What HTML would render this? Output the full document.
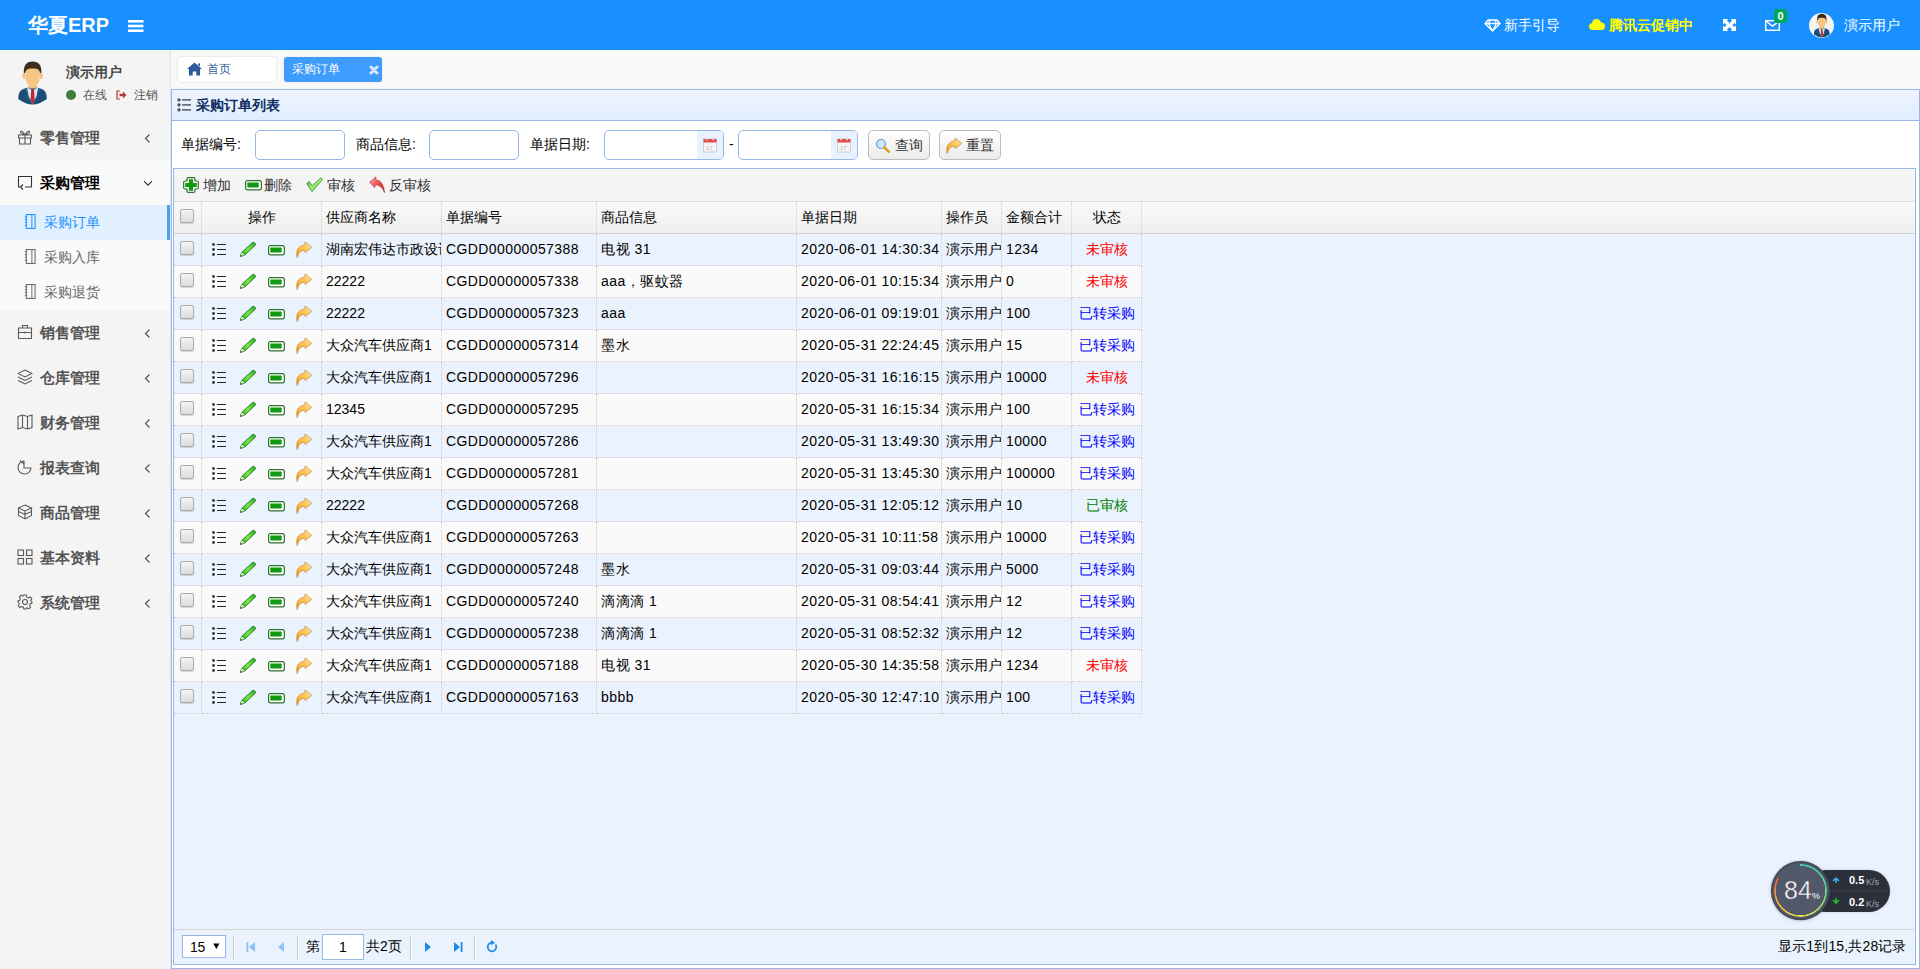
<!DOCTYPE html>
<html><head><meta charset="utf-8"><title>华夏ERP</title>
<style>
*{box-sizing:border-box;margin:0;padding:0}
html,body{width:1920px;height:969px;overflow:hidden}
body{position:relative;font-family:"Liberation Sans",sans-serif;font-size:14px;color:#333;background:#f9f9f9}
.a{position:absolute}
#hdr{left:0;top:0;width:1920px;height:50px;background:#1890ff;color:#fff}
#logo{left:28px;top:12px;font-size:20px;font-weight:bold;line-height:26px;white-space:nowrap}
#burger{left:128px;top:20px;width:15px;height:12px}
#burger i{position:absolute;left:0;width:15px;height:2.5px;background:#fff}
#side{left:0;top:50px;width:171px;height:919px;background:#f4f4f4;border-right:1px solid #e3e4e7}
.grp{position:absolute;left:0;width:170px;height:45px}
.grp .t{position:absolute;left:40px;top:14px;font-size:15px;font-weight:bold;color:#555;line-height:17px;white-space:nowrap}
.grp svg{position:absolute;left:17px;top:14px}
.grp .arr{position:absolute;left:144px;top:18px}
.sub{position:absolute;left:0;width:170px;height:35px}
.sub .t{position:absolute;left:44px;top:9px;font-size:14px;color:#666;line-height:16px;white-space:nowrap}
.sub svg{position:absolute;left:24px;top:10px}
#tabbar{left:171px;top:50px;width:1749px;height:39px;background:#f9f9f9}
.tab{position:absolute;top:57px;height:25px;border-radius:3px;font-size:12px;line-height:25px;white-space:nowrap}
#panel{left:171px;top:89px;width:1749px;height:880px;border:1px solid #95b8e7;background:#fff}
#ph{left:172px;top:90px;width:1747px;height:31px;background:linear-gradient(#eff5ff,#e0ecff);border-bottom:1px solid #95b8e7}
#ph .t{position:absolute;left:24px;top:7px;font-size:14px;font-weight:bold;color:#0e2d5f;line-height:16px}
.lbl{position:absolute;top:136px;font-size:14px;color:#000;line-height:16px;white-space:nowrap}
.inp{position:absolute;top:130px;height:30px;border:1px solid #95b8e7;border-radius:5px;background:#fff;overflow:hidden}
.inp .cal{position:absolute;right:0;top:0;width:26px;height:28px;background:#e8f1ff}
.btn{position:absolute;top:130px;height:30px;width:62px;border:1px solid #bbb;border-radius:5px;background:linear-gradient(#ffffff,#ebebeb);font-size:14px;color:#333;line-height:28px;white-space:nowrap}
#dg{left:173px;top:168px;width:1743px;height:797px;border:1px solid #95b8e7;background:#eaf2fd}
#tb{left:174px;top:169px;width:1741px;height:33px;background:#f4f4f4;border-bottom:1px solid #dcdcdc}
.tbi{position:absolute;top:8px;font-size:14px;color:#333;line-height:16px;white-space:nowrap}
.tbi svg{position:absolute;top:0}
.hr{position:absolute;left:174px;top:202px;width:1741px;height:32px;background:linear-gradient(#f9f9f9,#efefef);border-bottom:1px solid #d0d0d0}
.th{position:absolute;top:0;height:31px;border-right:1px dotted #ccc;font-size:14px;color:#000;line-height:31px;padding-left:4px;white-space:nowrap;overflow:hidden}
.th.ctr{text-align:center;padding-left:0}
.r{position:absolute;left:174px;width:968px;height:32px}
.r.alt{background:#fafafa}
.td{position:absolute;top:0;height:32px;border-right:1px dotted #ccc;border-bottom:1px dotted #ccc;white-space:nowrap;overflow:hidden}
.tx{font-size:14px;color:#000;line-height:31px;padding-left:4px}
.st{text-align:center;font-size:14px;line-height:31px}
.ck{position:absolute;left:6px;top:7px;width:14px;height:14px;border:1px solid #aaa;border-radius:2px;background:linear-gradient(#f4f4f4,#dcdcdc);box-shadow:0 1px 1px rgba(0,0,0,.15)}
.ic{position:absolute}
#pager{left:174px;top:929px;width:1741px;height:35px;padding-top:0;border-top:1px solid #d6d6d6;background:#eaf2fd}
.sep{position:absolute;top:6px;width:2px;height:24px;background:#ccc;border-right:1px solid #fff}

</style></head>
<body>
<svg width="0" height="0" style="position:absolute">
<defs>
<linearGradient id="g-pen" x1="0" y1="1" x2="1" y2="0"><stop offset="0" stop-color="#1e9a1e"/><stop offset="0.5" stop-color="#7ae84a"/><stop offset="1" stop-color="#22aa22"/></linearGradient>
<linearGradient id="g-redo" x1="0" y1="1" x2="1" y2="0"><stop offset="0" stop-color="#f29a12"/><stop offset="0.6" stop-color="#ffc860"/><stop offset="1" stop-color="#ffe6b0"/></linearGradient>
<linearGradient id="g-undo" x1="0" y1="0" x2="1" y2="1"><stop offset="0" stop-color="#ffb0b0"/><stop offset="0.6" stop-color="#f03a3a"/><stop offset="1" stop-color="#d02020"/></linearGradient>
<linearGradient id="g-chk" x1="0" y1="0" x2="1" y2="1"><stop offset="0" stop-color="#2aa52a"/><stop offset="0.5" stop-color="#a8f070"/><stop offset="1" stop-color="#3cb83c"/></linearGradient>
<g id="i-list"><circle cx="1.5" cy="1.5" r="1.4" fill="#333"/><circle cx="1.5" cy="6.5" r="1.4" fill="#333"/><circle cx="1.5" cy="11.5" r="1.4" fill="#333"/><rect x="5" y="1" width="9" height="1" fill="#222"/><rect x="5" y="6" width="9" height="1" fill="#222"/><rect x="5" y="11" width="9" height="1" fill="#222"/></g>
<g id="i-pen"><path d="M1.2 14.5 L2.79 10.32 L13.15 0.78 A2 2 0 0 1 15.85 3.72 L5.49 13.26 Z" fill="url(#g-pen)" stroke="#1a6e1a" stroke-width="0.8" stroke-linejoin="round"/><path d="M1.4 14.3 L2.9 10.6 L5.2 13 Z" fill="#fff3d0"/><path d="M1.1 14.6 L1.8 12.5 L3.3 13.9 Z" fill="#1a6e1a"/></g>
<g id="i-minus"><rect x="0.6" y="1.6" width="15.8" height="9.2" rx="2" fill="#fff" stroke="#2f6f2f" stroke-width="1.2"/><rect x="2.3" y="3.6" width="11.4" height="4.8" rx="0.6" fill="#119911"/></g>
<g id="i-redo"><path d="M1.2 16.6 Q-0.5 10 3 6.5 Q5.5 4 8.6 3.9 L9.2 1 L15.8 6.4 L9.2 11.6 L8.6 9.3 Q5 9.3 3.5 11.5 Q2.2 13.5 1.2 16.6 Z" fill="url(#g-redo)" stroke="#b87c2c" stroke-width="0.6" stroke-linejoin="round"/></g>
<g id="i-cal"><rect x="0.5" y="2" width="13" height="13" fill="#f4f4f4" stroke="#c8c8c8" stroke-width="0.8"/><rect x="0.5" y="2" width="13" height="3.5" fill="#e24e4e"/><rect x="3" y="0.5" width="1.6" height="3" rx="0.8" fill="#ddd"/><rect x="9.4" y="0.5" width="1.6" height="3" rx="0.8" fill="#ddd"/><text x="3" y="12.5" font-size="6" fill="#bbb" font-family="Liberation Sans">17</text></g>
<g id="i-search"><circle cx="6" cy="6" r="4.5" fill="#cde7fb" stroke="#6a9ec9" stroke-width="1.2"/><path d="M9.3 9.3 L13.8 13.8" stroke="#e09a1a" stroke-width="2.6" stroke-linecap="round"/></g>
<g id="avatar"><path d="M4.2 41 Q4 32.5 10 30.8 L14 29.5 H23 L27 30.8 Q33 32.5 32.9 41 Q25 46.5 18.5 46.5 Q12 46.5 4.2 41 Z" fill="#1b4d78"/><path d="M10 31 L13.5 30 L17 44 L12 38 L14 36 Z M27 31 L23.5 30 L20 44 L25 38 L23 36 Z" fill="#2a628f"/><rect x="14.4" y="24" width="8.4" height="6.5" rx="2" fill="#efc07e"/><path d="M13 29.3 L18.6 32.5 L24.2 29.3 L22.5 38 L18.6 46 L14.7 38 Z" fill="#dde6ef"/><path d="M17.2 31.8 H20 L20.6 42 L18.6 46.3 L16.6 42 Z" fill="#c8282d"/><ellipse cx="10" cy="18" rx="1.6" ry="3" fill="#f2c380"/><ellipse cx="27.2" cy="18" rx="1.6" ry="3" fill="#f2c380"/><path d="M11.6 13.5 Q11.6 9.6 18.6 9.6 Q25.8 9.6 25.8 13.5 V19 Q25.8 27.7 18.6 27.7 Q11.6 27.7 11.6 19 Z" fill="#f5c783"/><path d="M9.9 15.5 Q9 3.5 18.6 3.5 Q28.2 3.5 27.3 15.5 L25.8 14.5 Q25.5 10 18.6 10.5 Q11.8 10 11.4 14.5 Z" fill="#3f2b1b"/></g>
<clipPath id="cc"><circle cx="12.5" cy="12.5" r="12.5"/></clipPath>
<g id="avatar-c"><circle cx="12.5" cy="12.5" r="12.5" fill="#f4f4f4"/><g clip-path="url(#cc)"><g transform="translate(2.6 -1.1) scale(0.55)"><use href="#avatar"/></g></g></g>
</defs></svg>

<div id="hdr" class="a">
  <div id="logo" class="a">华夏ERP</div>
  <svg class="a" style="left:128px;top:19px" width="16" height="14" viewBox="0 0 16 14"><rect x="0" y="1" width="15.5" height="2.6" fill="#fff"/><rect x="0" y="5.7" width="15.5" height="2.6" fill="#fff"/><rect x="0" y="10.4" width="15.5" height="2.6" fill="#fff"/></svg>
  <svg class="a" style="left:1484px;top:19px" width="17" height="13" viewBox="0 0 17 13"><path d="M4 1 H13 L16 4.5 L8.5 12 L1 4.5 Z M1 4.5 H16 M6 1 L4.5 4.5 L8.5 12 L12.5 4.5 L11 1" fill="none" stroke="#fff" stroke-width="1.3" stroke-linejoin="round"/></svg>
  <div class="a" style="left:1504px;top:17px;font-size:14px;line-height:16px;white-space:nowrap">新手引导</div>
  <svg class="a" style="left:1589px;top:18px" width="16" height="12" viewBox="0 0 16 12"><path d="M4 12 Q0 12 0 8.5 Q0 5.5 3 5.2 Q3.5 1 7.5 1 Q11 1 12 4.5 Q16 4.8 16 8.3 Q16 12 12.5 12 Z" fill="#ffff00"/></svg>
  <div class="a" style="left:1609px;top:17px;font-size:14px;line-height:16px;font-weight:bold;color:#ffff00;white-space:nowrap">腾讯云促销中</div>
  <svg class="a" style="left:1723px;top:19px" width="13" height="12" viewBox="0 0 13 12"><path d="M0 0 H5.4 L3.9 1.5 L6.5 4.1 L4.1 6.5 L1.5 3.9 L0 5.4 Z" fill="#fff"/><g transform="translate(13 0) scale(-1 1)"><path d="M0 0 H5.4 L3.9 1.5 L6.5 4.1 L4.1 6.5 L1.5 3.9 L0 5.4 Z" fill="#fff"/></g><g transform="translate(0 12) scale(1 -1)"><path d="M0 0 H5.4 L3.9 1.5 L6.5 4.1 L4.1 6.5 L1.5 3.9 L0 5.4 Z" fill="#fff"/></g><g transform="translate(13 12) scale(-1 -1)"><path d="M0 0 H5.4 L3.9 1.5 L6.5 4.1 L4.1 6.5 L1.5 3.9 L0 5.4 Z" fill="#fff"/></g><path d="M4 4 L9 8.5 M9 4 L4 8.5" stroke="#fff" stroke-width="2.2"/></svg>
  <svg class="a" style="left:1765px;top:20px" width="15" height="11" viewBox="0 0 15 11"><rect x="0.7" y="0.7" width="13.6" height="9.6" fill="none" stroke="#fff" stroke-width="1.4"/><path d="M0.7 0.9 L7.5 6 L14.3 0.9" fill="none" stroke="#fff" stroke-width="1.4"/></svg>
  <div class="a" style="left:1774px;top:9px;width:13px;height:14px;background:#00a65a;border-radius:2px;color:#fff;font-size:11px;font-weight:bold;line-height:14px;text-align:center">0</div>
  <svg class="a" style="left:1809px;top:13px" width="25" height="25" viewBox="0 0 25 25"><use href="#avatar-c"/></svg>
  <div class="a" style="left:1844px;top:17px;font-size:14px;line-height:16px;white-space:nowrap">演示用户</div>
</div>

<div id="side" class="a">
  <svg class="a" style="left:14px;top:8px" width="36" height="48" viewBox="0 0 36 48"><use href="#avatar"/></svg>
  <div class="a" style="left:66px;top:14px;font-size:14px;line-height:16px;color:#444;font-weight:bold;white-space:nowrap">演示用户</div>
  <i class="a" style="left:66px;top:40px;width:10px;height:10px;border-radius:50%;background:#3d7d3d"></i>
  <div class="a" style="left:83px;top:38px;font-size:12px;line-height:14px;color:#555;white-space:nowrap">在线</div>
  <svg class="a" style="left:116px;top:40px" width="11" height="10" viewBox="0 0 11 10"><path d="M4 1 H1 V9 H4" fill="none" stroke="#b03a3a" stroke-width="1.2"/><path d="M3.5 3.8 H7 V1.5 L10.5 5 L7 8.5 V6.2 H3.5 Z" fill="#b03a3a"/></svg>
  <div class="a" style="left:134px;top:38px;font-size:12px;line-height:14px;color:#555;white-space:nowrap">注销</div>

  <div class="grp" style="top:65px"><svg width="16" height="16" viewBox="0 0 16 16"><path d="M1.5 6 H14.5 V9 H1.5 Z M2.5 9 V15 H13.5 V9 M8 6 V15 M8 6 Q5 1 3.5 2.5 Q2.5 4 8 6 Q11 1 12.5 2.5 Q13.5 4 8 6" fill="none" stroke="#5a5a5a" stroke-width="1.1"/></svg><span class="t">零售管理</span><svg class="arr" width="7" height="11" viewBox="0 0 7 11"><path d="M5.5 1.5 L1.5 5.5 L5.5 9.5" fill="none" stroke="#555" stroke-width="1.2"/></svg></div>
  <div class="a" style="left:0;top:110px;width:170px;height:150px;background:#fafafa"></div>
  <div class="grp" style="top:110px"><svg width="16" height="16" viewBox="0 0 16 16"><path d="M4 13 H1.5 V2.5 H14.5 V13 H8 M6 10.5 L3.5 13 L6 15.5" fill="none" stroke="#333" stroke-width="1.1"/></svg><span class="t" style="color:#000">采购管理</span><svg class="arr" style="left:143px;top:20px" width="10" height="7" viewBox="0 0 10 7"><path d="M1 1.2 L5 5.2 L9 1.2" fill="none" stroke="#333" stroke-width="1.2"/></svg></div>
  <div class="sub" style="top:155px;background:#e1f0ff"><svg width="12" height="15" viewBox="0 0 12 16" style="top:9px"><rect x="2" y="0.6" width="9.4" height="14.8" fill="none" stroke="#1890ff" stroke-width="1.1"/><path d="M0.5 3 H3 M0.5 6 H3 M0.5 9 H3 M0.5 12 H3 M8 0.6 V15.4" fill="none" stroke="#1890ff" stroke-width="1"/></svg><span class="t" style="color:#1890ff">采购订单</span><i class="a" style="left:167px;top:0;width:3px;height:35px;background:#4f9fec"></i></div>
  <div class="sub" style="top:190px"><svg width="12" height="15" viewBox="0 0 12 16" style="top:9px"><rect x="2" y="0.6" width="9.4" height="14.8" fill="none" stroke="#666" stroke-width="1.1"/><path d="M0.5 3 H3 M0.5 6 H3 M0.5 9 H3 M0.5 12 H3 M8 0.6 V15.4" fill="none" stroke="#666" stroke-width="1"/></svg><span class="t">采购入库</span></div>
  <div class="sub" style="top:225px"><svg width="12" height="15" viewBox="0 0 12 16" style="top:9px"><rect x="2" y="0.6" width="9.4" height="14.8" fill="none" stroke="#666" stroke-width="1.1"/><path d="M0.5 3 H3 M0.5 6 H3 M0.5 9 H3 M0.5 12 H3 M8 0.6 V15.4" fill="none" stroke="#666" stroke-width="1"/></svg><span class="t">采购退货</span></div>
  <div class="grp" style="top:260px"><svg width="16" height="16" viewBox="0 0 16 16"><path d="M1.5 4 H14.5 V14.5 H1.5 Z M5.5 4 V1.5 H10.5 V4 M1.5 8.5 H14.5 M8 7.5 V9.5" fill="none" stroke="#5a5a5a" stroke-width="1.1"/></svg><span class="t">销售管理</span><svg class="arr" width="7" height="11" viewBox="0 0 7 11"><path d="M5.5 1.5 L1.5 5.5 L5.5 9.5" fill="none" stroke="#555" stroke-width="1.2"/></svg></div>
  <div class="grp" style="top:305px"><svg width="16" height="16" viewBox="0 0 16 16"><path d="M8 1 L15 4.5 L8 8 L1 4.5 Z M1 8 L8 11.5 L15 8 M1 11.5 L8 15 L15 11.5" fill="none" stroke="#5a5a5a" stroke-width="1.1"/></svg><span class="t">仓库管理</span><svg class="arr" width="7" height="11" viewBox="0 0 7 11"><path d="M5.5 1.5 L1.5 5.5 L5.5 9.5" fill="none" stroke="#555" stroke-width="1.2"/></svg></div>
  <div class="grp" style="top:350px"><svg width="16" height="16" viewBox="0 0 16 16"><path d="M1 2.5 L5.5 1 L10.5 2.5 L15 1 V13.5 L10.5 15 L5.5 13.5 L1 15 Z M5.5 1 V13.5 M10.5 2.5 V15" fill="none" stroke="#5a5a5a" stroke-width="1.1"/></svg><span class="t">财务管理</span><svg class="arr" width="7" height="11" viewBox="0 0 7 11"><path d="M5.5 1.5 L1.5 5.5 L5.5 9.5" fill="none" stroke="#555" stroke-width="1.2"/></svg></div>
  <div class="grp" style="top:395px"><svg width="16" height="16" viewBox="0 0 16 16"><path d="M7 2 A6.5 6.5 0 1 0 14 9 H7 Z" fill="none" stroke="#5a5a5a" stroke-width="1.1"/><path d="M3 1.5 L7 5" fill="none" stroke="#5a5a5a" stroke-width="1.1"/></svg><span class="t">报表查询</span><svg class="arr" width="7" height="11" viewBox="0 0 7 11"><path d="M5.5 1.5 L1.5 5.5 L5.5 9.5" fill="none" stroke="#555" stroke-width="1.2"/></svg></div>
  <div class="grp" style="top:440px"><svg width="16" height="16" viewBox="0 0 16 16"><path d="M8 1 L14.5 4 L8 7 L1.5 4 Z M1.5 4 V11.5 L8 15 L14.5 11.5 V4 M8 7 V15 M1.5 7.5 L8 10.5 L14.5 7.5" fill="none" stroke="#5a5a5a" stroke-width="1.1"/></svg><span class="t">商品管理</span><svg class="arr" width="7" height="11" viewBox="0 0 7 11"><path d="M5.5 1.5 L1.5 5.5 L5.5 9.5" fill="none" stroke="#555" stroke-width="1.2"/></svg></div>
  <div class="grp" style="top:485px"><svg width="16" height="16" viewBox="0 0 16 16"><rect x="1" y="1" width="5.5" height="5.5" fill="none" stroke="#5a5a5a" stroke-width="1.1"/><rect x="9.5" y="1" width="5.5" height="5.5" fill="none" stroke="#5a5a5a" stroke-width="1.1"/><rect x="1" y="9.5" width="5.5" height="5.5" fill="none" stroke="#5a5a5a" stroke-width="1.1"/><rect x="9.5" y="9.5" width="5.5" height="5.5" fill="none" stroke="#5a5a5a" stroke-width="1.1"/></svg><span class="t">基本资料</span><svg class="arr" width="7" height="11" viewBox="0 0 7 11"><path d="M5.5 1.5 L1.5 5.5 L5.5 9.5" fill="none" stroke="#555" stroke-width="1.2"/></svg></div>
  <div class="grp" style="top:530px"><svg width="16" height="16" viewBox="0 0 16 16"><circle cx="8" cy="8" r="2.5" fill="none" stroke="#5a5a5a" stroke-width="1.1"/><path d="M6.8 1 H9.2 L9.6 3 L11.3 3.9 L13.1 2.9 L14.8 4.6 L13.8 6.4 L14.4 8 L15 8 V9.2 L13.2 9.7 L12.6 11.3 L13.6 13.1 L11.9 14.8 L10.1 13.8 L9.2 14.2 V15 H6.8 L6.4 13.2 L4.8 12.5 L3 13.5 L1.3 11.8 L2.3 10 L1.7 8.5 L1 8 V6.8 L2.8 6.3 L3.4 4.7 L2.4 2.9 L4.1 1.2 L5.9 2.2 L6.4 1.9 Z" fill="none" stroke="#5a5a5a" stroke-width="1.1"/></svg><span class="t">系统管理</span><svg class="arr" width="7" height="11" viewBox="0 0 7 11"><path d="M5.5 1.5 L1.5 5.5 L5.5 9.5" fill="none" stroke="#555" stroke-width="1.2"/></svg></div>
</div>

<div id="tabbar" class="a"></div>
<div class="tab" style="left:178px;width:98px;background:#fff;box-shadow:0 0 2px rgba(0,0,0,.2)">
  <svg class="a" style="left:8px;top:5px" width="17" height="14" viewBox="0 0 16 14"><path d="M8 0.5 L15.5 7 L13.5 7 V13.5 H9.8 V9.5 H6.2 V13.5 H2.5 V7 H0.5 Z M11.5 1.5 H13.5 V4.5 L11.5 2.8 Z" fill="#2d5b9a"/></svg>
  <span class="a" style="left:29px;top:0;color:#2d5b9a">首页</span>
</div>
<div class="tab" style="left:284px;width:98px;background:#3d9cfd;color:#fff;box-shadow:0 0 2px rgba(0,0,0,.12)">
  <span class="a" style="left:8px;top:0">采购订单</span>
  <svg class="a" style="left:85px;top:8px" width="10" height="10" viewBox="0 0 10 10"><path d="M2 2 L8 8 M8 2 L2 8" stroke="#dce9fc" stroke-width="3" stroke-linecap="round"/></svg>
</div>

<div id="panel" class="a"></div>
<div id="ph" class="a">
  <svg class="a" style="left:5px;top:8px" width="16" height="14" viewBox="0 0 16 14"><circle cx="2" cy="1.9" r="1.2" fill="#777" stroke="#333" stroke-width="0.9"/><circle cx="2" cy="6.9" r="1.2" fill="#777" stroke="#333" stroke-width="0.9"/><circle cx="2" cy="11.9" r="1.2" fill="#777" stroke="#333" stroke-width="0.9"/><rect x="5" y="1.3" width="9" height="1.2" fill="#333"/><rect x="5" y="6.3" width="9" height="1.2" fill="#333"/><rect x="5" y="11.3" width="9" height="1.2" fill="#333"/></svg>
  <span class="t">采购订单列表</span>
</div>
<div class="lbl" style="left:181px">单据编号:</div>
<div class="inp" style="left:255px;width:90px"></div>
<div class="lbl" style="left:356px">商品信息:</div>
<div class="inp" style="left:429px;width:90px"></div>
<div class="lbl" style="left:530px">单据日期:</div>
<div class="inp" style="left:604px;width:120px"><div class="cal"><svg class="a" style="left:6px;top:6px" width="14" height="16"><use href="#i-cal"/></svg></div></div>
<div class="a" style="left:729px;top:136px;font-size:14px;line-height:16px;color:#000">-</div>
<div class="inp" style="left:738px;width:120px"><div class="cal"><svg class="a" style="left:6px;top:6px" width="14" height="16"><use href="#i-cal"/></svg></div></div>
<div class="btn" style="left:868px"><svg class="a" style="left:6px;top:7px" width="15" height="15"><use href="#i-search"/></svg><span class="a" style="left:26px;top:0">查询</span></div>
<div class="btn" style="left:939px"><svg class="a" style="left:6px;top:6px" width="17" height="17" viewBox="0 0 17 17"><use href="#i-redo"/></svg><span class="a" style="left:26px;top:0">重置</span></div>

<div id="dg" class="a"></div>
<div id="tb" class="a">
  <div class="tbi" style="left:9px"><svg width="16" height="16" viewBox="0 0 16 16" style="left:0;top:0"><path d="M5.2 0.7 H10.8 Q12 0.7 12 1.9 V4 H14.1 Q15.3 4 15.3 5.2 V10.8 Q15.3 12 14.1 12 H12 V14.1 Q12 15.3 10.8 15.3 H5.2 Q4 15.3 4 14.1 V12 H1.9 Q0.7 12 0.7 10.8 V5.2 Q0.7 4 1.9 4 H4 V1.9 Q4 0.7 5.2 0.7 Z" fill="#fff" stroke="#2f6f2f" stroke-width="1.2"/><path d="M5.9 2.2 H10.1 V5.9 H13.8 V10.1 H10.1 V13.8 H5.9 V10.1 H2.2 V5.9 H5.9 Z" fill="#109a10"/></svg><span style="position:absolute;left:20px;top:0">增加</span></div>
  <div class="tbi" style="left:71px"><svg width="17" height="12" viewBox="0 0 17 12" style="left:0;top:2px"><use href="#i-minus"/></svg><span style="position:absolute;left:19px;top:0">删除</span></div>
  <div class="tbi" style="left:132px"><svg width="17" height="16" viewBox="0 0 17 16" style="left:0;top:0"><path d="M0.8 6.5 L3.2 4.6 L6.2 8.8 L15 0.8 L16.6 2.4 L6 14.6 Z" fill="url(#g-chk)" stroke="#2a8a2a" stroke-width="0.8" stroke-linejoin="round"/></svg><span style="position:absolute;left:21px;top:0">审核</span></div>
  <div class="tbi" style="left:195px"><svg width="17" height="19" viewBox="0 0 17 19" style="left:0;top:-2px"><path d="M0.6 7.2 L7 1.8 L6.8 4.8 Q14.5 5.5 15.6 17.6 Q12.5 10 6.2 9.6 L5.8 12.6 Z" fill="url(#g-undo)" stroke="#9e3030" stroke-width="0.6" stroke-linejoin="round"/></svg><span style="position:absolute;left:20px;top:0">反审核</span></div>
</div>
<div class="hr"><div class="th" style="left:0px;width:28px"><i class="ck"></i></div><div class="th ctr" style="left:28px;width:120px">操作</div><div class="th" style="left:148px;width:120px">供应商名称</div><div class="th" style="left:268px;width:155px">单据编号</div><div class="th" style="left:423px;width:200px">商品信息</div><div class="th" style="left:623px;width:145px">单据日期</div><div class="th" style="left:768px;width:60px">操作员</div><div class="th" style="left:828px;width:70px">金额合计</div><div class="th ctr" style="left:898px;width:70px">状态</div></div>
<div class="r" style="top:234px"><div class="td" style="left:0px;width:28px"><i class="ck"></i></div><div class="td" style="left:28px;width:120px"><svg class="ic" style="left:10px;top:9px" width="16" height="15"><use href="#i-list"/></svg><svg class="ic" style="left:37px;top:8px" width="17" height="17"><use href="#i-pen"/></svg><svg class="ic" style="left:66px;top:10px" width="17" height="12"><use href="#i-minus"/></svg><svg class="ic" style="left:94px;top:7px" width="17" height="17"><use href="#i-redo"/></svg></div><div class="td tx" style="left:148px;width:120px;letter-spacing:0px">湖南宏伟达市政设计</div><div class="td tx" style="left:268px;width:155px;letter-spacing:0.4px">CGDD00000057388</div><div class="td tx" style="left:423px;width:200px;letter-spacing:0.5px">电视 31</div><div class="td tx" style="left:623px;width:145px;letter-spacing:0.45px">2020-06-01 14:30:34</div><div class="td tx" style="left:768px;width:60px;letter-spacing:0px">演示用户</div><div class="td tx" style="left:828px;width:70px;letter-spacing:0.4px">1234</div><div class="td st" style="left:898px;width:70px;color:#ff0000">未审核</div></div>
<div class="r alt" style="top:266px"><div class="td" style="left:0px;width:28px"><i class="ck"></i></div><div class="td" style="left:28px;width:120px"><svg class="ic" style="left:10px;top:9px" width="16" height="15"><use href="#i-list"/></svg><svg class="ic" style="left:37px;top:8px" width="17" height="17"><use href="#i-pen"/></svg><svg class="ic" style="left:66px;top:10px" width="17" height="12"><use href="#i-minus"/></svg><svg class="ic" style="left:94px;top:7px" width="17" height="17"><use href="#i-redo"/></svg></div><div class="td tx" style="left:148px;width:120px;letter-spacing:0px">22222</div><div class="td tx" style="left:268px;width:155px;letter-spacing:0.4px">CGDD00000057338</div><div class="td tx" style="left:423px;width:200px;letter-spacing:0.5px">aaa，驱蚊器</div><div class="td tx" style="left:623px;width:145px;letter-spacing:0.45px">2020-06-01 10:15:34</div><div class="td tx" style="left:768px;width:60px;letter-spacing:0px">演示用户</div><div class="td tx" style="left:828px;width:70px;letter-spacing:0.4px">0</div><div class="td st" style="left:898px;width:70px;color:#ff0000">未审核</div></div>
<div class="r" style="top:298px"><div class="td" style="left:0px;width:28px"><i class="ck"></i></div><div class="td" style="left:28px;width:120px"><svg class="ic" style="left:10px;top:9px" width="16" height="15"><use href="#i-list"/></svg><svg class="ic" style="left:37px;top:8px" width="17" height="17"><use href="#i-pen"/></svg><svg class="ic" style="left:66px;top:10px" width="17" height="12"><use href="#i-minus"/></svg><svg class="ic" style="left:94px;top:7px" width="17" height="17"><use href="#i-redo"/></svg></div><div class="td tx" style="left:148px;width:120px;letter-spacing:0px">22222</div><div class="td tx" style="left:268px;width:155px;letter-spacing:0.4px">CGDD00000057323</div><div class="td tx" style="left:423px;width:200px;letter-spacing:0.5px">aaa</div><div class="td tx" style="left:623px;width:145px;letter-spacing:0.45px">2020-06-01 09:19:01</div><div class="td tx" style="left:768px;width:60px;letter-spacing:0px">演示用户</div><div class="td tx" style="left:828px;width:70px;letter-spacing:0.4px">100</div><div class="td st" style="left:898px;width:70px;color:#0000ff">已转采购</div></div>
<div class="r alt" style="top:330px"><div class="td" style="left:0px;width:28px"><i class="ck"></i></div><div class="td" style="left:28px;width:120px"><svg class="ic" style="left:10px;top:9px" width="16" height="15"><use href="#i-list"/></svg><svg class="ic" style="left:37px;top:8px" width="17" height="17"><use href="#i-pen"/></svg><svg class="ic" style="left:66px;top:10px" width="17" height="12"><use href="#i-minus"/></svg><svg class="ic" style="left:94px;top:7px" width="17" height="17"><use href="#i-redo"/></svg></div><div class="td tx" style="left:148px;width:120px;letter-spacing:0px">大众汽车供应商1</div><div class="td tx" style="left:268px;width:155px;letter-spacing:0.4px">CGDD00000057314</div><div class="td tx" style="left:423px;width:200px;letter-spacing:0.5px">墨水</div><div class="td tx" style="left:623px;width:145px;letter-spacing:0.45px">2020-05-31 22:24:45</div><div class="td tx" style="left:768px;width:60px;letter-spacing:0px">演示用户</div><div class="td tx" style="left:828px;width:70px;letter-spacing:0.4px">15</div><div class="td st" style="left:898px;width:70px;color:#0000ff">已转采购</div></div>
<div class="r" style="top:362px"><div class="td" style="left:0px;width:28px"><i class="ck"></i></div><div class="td" style="left:28px;width:120px"><svg class="ic" style="left:10px;top:9px" width="16" height="15"><use href="#i-list"/></svg><svg class="ic" style="left:37px;top:8px" width="17" height="17"><use href="#i-pen"/></svg><svg class="ic" style="left:66px;top:10px" width="17" height="12"><use href="#i-minus"/></svg><svg class="ic" style="left:94px;top:7px" width="17" height="17"><use href="#i-redo"/></svg></div><div class="td tx" style="left:148px;width:120px;letter-spacing:0px">大众汽车供应商1</div><div class="td tx" style="left:268px;width:155px;letter-spacing:0.4px">CGDD00000057296</div><div class="td tx" style="left:423px;width:200px;letter-spacing:0.5px"></div><div class="td tx" style="left:623px;width:145px;letter-spacing:0.45px">2020-05-31 16:16:15</div><div class="td tx" style="left:768px;width:60px;letter-spacing:0px">演示用户</div><div class="td tx" style="left:828px;width:70px;letter-spacing:0.4px">10000</div><div class="td st" style="left:898px;width:70px;color:#ff0000">未审核</div></div>
<div class="r alt" style="top:394px"><div class="td" style="left:0px;width:28px"><i class="ck"></i></div><div class="td" style="left:28px;width:120px"><svg class="ic" style="left:10px;top:9px" width="16" height="15"><use href="#i-list"/></svg><svg class="ic" style="left:37px;top:8px" width="17" height="17"><use href="#i-pen"/></svg><svg class="ic" style="left:66px;top:10px" width="17" height="12"><use href="#i-minus"/></svg><svg class="ic" style="left:94px;top:7px" width="17" height="17"><use href="#i-redo"/></svg></div><div class="td tx" style="left:148px;width:120px;letter-spacing:0px">12345</div><div class="td tx" style="left:268px;width:155px;letter-spacing:0.4px">CGDD00000057295</div><div class="td tx" style="left:423px;width:200px;letter-spacing:0.5px"></div><div class="td tx" style="left:623px;width:145px;letter-spacing:0.45px">2020-05-31 16:15:34</div><div class="td tx" style="left:768px;width:60px;letter-spacing:0px">演示用户</div><div class="td tx" style="left:828px;width:70px;letter-spacing:0.4px">100</div><div class="td st" style="left:898px;width:70px;color:#0000ff">已转采购</div></div>
<div class="r" style="top:426px"><div class="td" style="left:0px;width:28px"><i class="ck"></i></div><div class="td" style="left:28px;width:120px"><svg class="ic" style="left:10px;top:9px" width="16" height="15"><use href="#i-list"/></svg><svg class="ic" style="left:37px;top:8px" width="17" height="17"><use href="#i-pen"/></svg><svg class="ic" style="left:66px;top:10px" width="17" height="12"><use href="#i-minus"/></svg><svg class="ic" style="left:94px;top:7px" width="17" height="17"><use href="#i-redo"/></svg></div><div class="td tx" style="left:148px;width:120px;letter-spacing:0px">大众汽车供应商1</div><div class="td tx" style="left:268px;width:155px;letter-spacing:0.4px">CGDD00000057286</div><div class="td tx" style="left:423px;width:200px;letter-spacing:0.5px"></div><div class="td tx" style="left:623px;width:145px;letter-spacing:0.45px">2020-05-31 13:49:30</div><div class="td tx" style="left:768px;width:60px;letter-spacing:0px">演示用户</div><div class="td tx" style="left:828px;width:70px;letter-spacing:0.4px">10000</div><div class="td st" style="left:898px;width:70px;color:#0000ff">已转采购</div></div>
<div class="r alt" style="top:458px"><div class="td" style="left:0px;width:28px"><i class="ck"></i></div><div class="td" style="left:28px;width:120px"><svg class="ic" style="left:10px;top:9px" width="16" height="15"><use href="#i-list"/></svg><svg class="ic" style="left:37px;top:8px" width="17" height="17"><use href="#i-pen"/></svg><svg class="ic" style="left:66px;top:10px" width="17" height="12"><use href="#i-minus"/></svg><svg class="ic" style="left:94px;top:7px" width="17" height="17"><use href="#i-redo"/></svg></div><div class="td tx" style="left:148px;width:120px;letter-spacing:0px">大众汽车供应商1</div><div class="td tx" style="left:268px;width:155px;letter-spacing:0.4px">CGDD00000057281</div><div class="td tx" style="left:423px;width:200px;letter-spacing:0.5px"></div><div class="td tx" style="left:623px;width:145px;letter-spacing:0.45px">2020-05-31 13:45:30</div><div class="td tx" style="left:768px;width:60px;letter-spacing:0px">演示用户</div><div class="td tx" style="left:828px;width:70px;letter-spacing:0.4px">100000</div><div class="td st" style="left:898px;width:70px;color:#0000ff">已转采购</div></div>
<div class="r" style="top:490px"><div class="td" style="left:0px;width:28px"><i class="ck"></i></div><div class="td" style="left:28px;width:120px"><svg class="ic" style="left:10px;top:9px" width="16" height="15"><use href="#i-list"/></svg><svg class="ic" style="left:37px;top:8px" width="17" height="17"><use href="#i-pen"/></svg><svg class="ic" style="left:66px;top:10px" width="17" height="12"><use href="#i-minus"/></svg><svg class="ic" style="left:94px;top:7px" width="17" height="17"><use href="#i-redo"/></svg></div><div class="td tx" style="left:148px;width:120px;letter-spacing:0px">22222</div><div class="td tx" style="left:268px;width:155px;letter-spacing:0.4px">CGDD00000057268</div><div class="td tx" style="left:423px;width:200px;letter-spacing:0.5px"></div><div class="td tx" style="left:623px;width:145px;letter-spacing:0.45px">2020-05-31 12:05:12</div><div class="td tx" style="left:768px;width:60px;letter-spacing:0px">演示用户</div><div class="td tx" style="left:828px;width:70px;letter-spacing:0.4px">10</div><div class="td st" style="left:898px;width:70px;color:#008000">已审核</div></div>
<div class="r alt" style="top:522px"><div class="td" style="left:0px;width:28px"><i class="ck"></i></div><div class="td" style="left:28px;width:120px"><svg class="ic" style="left:10px;top:9px" width="16" height="15"><use href="#i-list"/></svg><svg class="ic" style="left:37px;top:8px" width="17" height="17"><use href="#i-pen"/></svg><svg class="ic" style="left:66px;top:10px" width="17" height="12"><use href="#i-minus"/></svg><svg class="ic" style="left:94px;top:7px" width="17" height="17"><use href="#i-redo"/></svg></div><div class="td tx" style="left:148px;width:120px;letter-spacing:0px">大众汽车供应商1</div><div class="td tx" style="left:268px;width:155px;letter-spacing:0.4px">CGDD00000057263</div><div class="td tx" style="left:423px;width:200px;letter-spacing:0.5px"></div><div class="td tx" style="left:623px;width:145px;letter-spacing:0.45px">2020-05-31 10:11:58</div><div class="td tx" style="left:768px;width:60px;letter-spacing:0px">演示用户</div><div class="td tx" style="left:828px;width:70px;letter-spacing:0.4px">10000</div><div class="td st" style="left:898px;width:70px;color:#0000ff">已转采购</div></div>
<div class="r" style="top:554px"><div class="td" style="left:0px;width:28px"><i class="ck"></i></div><div class="td" style="left:28px;width:120px"><svg class="ic" style="left:10px;top:9px" width="16" height="15"><use href="#i-list"/></svg><svg class="ic" style="left:37px;top:8px" width="17" height="17"><use href="#i-pen"/></svg><svg class="ic" style="left:66px;top:10px" width="17" height="12"><use href="#i-minus"/></svg><svg class="ic" style="left:94px;top:7px" width="17" height="17"><use href="#i-redo"/></svg></div><div class="td tx" style="left:148px;width:120px;letter-spacing:0px">大众汽车供应商1</div><div class="td tx" style="left:268px;width:155px;letter-spacing:0.4px">CGDD00000057248</div><div class="td tx" style="left:423px;width:200px;letter-spacing:0.5px">墨水</div><div class="td tx" style="left:623px;width:145px;letter-spacing:0.45px">2020-05-31 09:03:44</div><div class="td tx" style="left:768px;width:60px;letter-spacing:0px">演示用户</div><div class="td tx" style="left:828px;width:70px;letter-spacing:0.4px">5000</div><div class="td st" style="left:898px;width:70px;color:#0000ff">已转采购</div></div>
<div class="r alt" style="top:586px"><div class="td" style="left:0px;width:28px"><i class="ck"></i></div><div class="td" style="left:28px;width:120px"><svg class="ic" style="left:10px;top:9px" width="16" height="15"><use href="#i-list"/></svg><svg class="ic" style="left:37px;top:8px" width="17" height="17"><use href="#i-pen"/></svg><svg class="ic" style="left:66px;top:10px" width="17" height="12"><use href="#i-minus"/></svg><svg class="ic" style="left:94px;top:7px" width="17" height="17"><use href="#i-redo"/></svg></div><div class="td tx" style="left:148px;width:120px;letter-spacing:0px">大众汽车供应商1</div><div class="td tx" style="left:268px;width:155px;letter-spacing:0.4px">CGDD00000057240</div><div class="td tx" style="left:423px;width:200px;letter-spacing:0.5px">滴滴滴 1</div><div class="td tx" style="left:623px;width:145px;letter-spacing:0.45px">2020-05-31 08:54:41</div><div class="td tx" style="left:768px;width:60px;letter-spacing:0px">演示用户</div><div class="td tx" style="left:828px;width:70px;letter-spacing:0.4px">12</div><div class="td st" style="left:898px;width:70px;color:#0000ff">已转采购</div></div>
<div class="r" style="top:618px"><div class="td" style="left:0px;width:28px"><i class="ck"></i></div><div class="td" style="left:28px;width:120px"><svg class="ic" style="left:10px;top:9px" width="16" height="15"><use href="#i-list"/></svg><svg class="ic" style="left:37px;top:8px" width="17" height="17"><use href="#i-pen"/></svg><svg class="ic" style="left:66px;top:10px" width="17" height="12"><use href="#i-minus"/></svg><svg class="ic" style="left:94px;top:7px" width="17" height="17"><use href="#i-redo"/></svg></div><div class="td tx" style="left:148px;width:120px;letter-spacing:0px">大众汽车供应商1</div><div class="td tx" style="left:268px;width:155px;letter-spacing:0.4px">CGDD00000057238</div><div class="td tx" style="left:423px;width:200px;letter-spacing:0.5px">滴滴滴 1</div><div class="td tx" style="left:623px;width:145px;letter-spacing:0.45px">2020-05-31 08:52:32</div><div class="td tx" style="left:768px;width:60px;letter-spacing:0px">演示用户</div><div class="td tx" style="left:828px;width:70px;letter-spacing:0.4px">12</div><div class="td st" style="left:898px;width:70px;color:#0000ff">已转采购</div></div>
<div class="r alt" style="top:650px"><div class="td" style="left:0px;width:28px"><i class="ck"></i></div><div class="td" style="left:28px;width:120px"><svg class="ic" style="left:10px;top:9px" width="16" height="15"><use href="#i-list"/></svg><svg class="ic" style="left:37px;top:8px" width="17" height="17"><use href="#i-pen"/></svg><svg class="ic" style="left:66px;top:10px" width="17" height="12"><use href="#i-minus"/></svg><svg class="ic" style="left:94px;top:7px" width="17" height="17"><use href="#i-redo"/></svg></div><div class="td tx" style="left:148px;width:120px;letter-spacing:0px">大众汽车供应商1</div><div class="td tx" style="left:268px;width:155px;letter-spacing:0.4px">CGDD00000057188</div><div class="td tx" style="left:423px;width:200px;letter-spacing:0.5px">电视 31</div><div class="td tx" style="left:623px;width:145px;letter-spacing:0.45px">2020-05-30 14:35:58</div><div class="td tx" style="left:768px;width:60px;letter-spacing:0px">演示用户</div><div class="td tx" style="left:828px;width:70px;letter-spacing:0.4px">1234</div><div class="td st" style="left:898px;width:70px;color:#ff0000">未审核</div></div>
<div class="r" style="top:682px"><div class="td" style="left:0px;width:28px"><i class="ck"></i></div><div class="td" style="left:28px;width:120px"><svg class="ic" style="left:10px;top:9px" width="16" height="15"><use href="#i-list"/></svg><svg class="ic" style="left:37px;top:8px" width="17" height="17"><use href="#i-pen"/></svg><svg class="ic" style="left:66px;top:10px" width="17" height="12"><use href="#i-minus"/></svg><svg class="ic" style="left:94px;top:7px" width="17" height="17"><use href="#i-redo"/></svg></div><div class="td tx" style="left:148px;width:120px;letter-spacing:0px">大众汽车供应商1</div><div class="td tx" style="left:268px;width:155px;letter-spacing:0.4px">CGDD00000057163</div><div class="td tx" style="left:423px;width:200px;letter-spacing:0.5px">bbbb</div><div class="td tx" style="left:623px;width:145px;letter-spacing:0.45px">2020-05-30 12:47:10</div><div class="td tx" style="left:768px;width:60px;letter-spacing:0px">演示用户</div><div class="td tx" style="left:828px;width:70px;letter-spacing:0.4px">100</div><div class="td st" style="left:898px;width:70px;color:#0000ff">已转采购</div></div>

<div id="pager" class="a">
  <div class="a" style="left:8px;top:5px;width:44px;height:23px;border:1px solid #95b8e7;background:#fff;font-size:14px;line-height:21px;color:#000"><span class="a" style="left:7px;top:1px;letter-spacing:-0.3px">15</span><svg class="a" style="left:30px;top:7px" width="7" height="7" viewBox="0 0 7 7"><path d="M0.3 0.5 H6.5 L3.4 6 Z" fill="#000"/></svg></div>
  <i class="sep" style="left:59px"></i>
  <svg class="a" style="left:72px;top:11px" width="10" height="12" viewBox="0 0 10 12"><rect x="0.5" y="1" width="1.8" height="10" fill="#8ec2f0"/><path d="M9 1 L3 6 L9 11 Z" fill="#8ec2f0"/></svg>
  <svg class="a" style="left:103px;top:11px" width="8" height="12" viewBox="0 0 8 12"><path d="M7 1 L1 6 L7 11 Z" fill="#8ec2f0"/></svg>
  <i class="sep" style="left:123px"></i>
  <span class="a" style="left:132px;top:8px;font-size:14px;line-height:16px;color:#000">第</span>
  <div class="a" style="left:148px;top:4px;width:42px;height:26px;border:1px solid #95b8e7;background:#fff;font-size:14px;line-height:24px;color:#000;text-align:center">1</div>
  <span class="a" style="left:192px;top:8px;font-size:14px;line-height:16px;color:#000;white-space:nowrap">共2页</span>
  <i class="sep" style="left:236px"></i>
  <svg class="a" style="left:250px;top:11px" width="8" height="12" viewBox="0 0 8 12"><path d="M1 1 L7 6 L1 11 Z" fill="#1b8ae8"/></svg>
  <svg class="a" style="left:279px;top:11px" width="10" height="12" viewBox="0 0 10 12"><path d="M1 1 L7 6 L1 11 Z" fill="#1b8ae8"/><rect x="7.7" y="1" width="1.8" height="10" fill="#1b8ae8"/></svg>
  <i class="sep" style="left:300px"></i>
  <svg class="a" style="left:312px;top:10px" width="12" height="13" viewBox="0 0 12 13"><path d="M9.5 4.5 A4.3 4.3 0 1 1 6 2.7" fill="none" stroke="#1b8ae8" stroke-width="1.7"/><path d="M5 0 L9 2.7 L5 5.2 Z" fill="#1b8ae8"/></svg>
  <span class="a" style="left:1604px;top:8px;font-size:14px;line-height:16px;color:#000;white-space:nowrap;letter-spacing:0.15px">显示1到15,共28记录</span>
</div>

<svg class="a" style="left:1765px;top:855px" width="130" height="70" viewBox="0 0 130 70">
  <defs>
    <linearGradient id="arcg" x1="0" y1="0" x2="0" y2="1"><stop offset="0" stop-color="#2fd6c9"/><stop offset="0.5" stop-color="#7ee070"/><stop offset="0.85" stop-color="#f0d23a"/><stop offset="1" stop-color="#f5a03a"/></linearGradient>
    <filter id="sh" x="-20%" y="-20%" width="140%" height="140%"><feGaussianBlur stdDeviation="1.5"/></filter>
  </defs>
  <rect x="40" y="15" width="85" height="42" rx="21" fill="#000" opacity="0.15" filter="url(#sh)"/>
  <rect x="40" y="15" width="85" height="42" rx="21" fill="#2c303b"/>
  <rect x="64" y="35.5" width="59" height="1" fill="#3d424e"/>
  <circle cx="35.5" cy="36" r="30" fill="#000" opacity="0.18" filter="url(#sh)"/>
  <circle cx="35.5" cy="35.7" r="29.6" fill="#434856"/>
  <circle cx="35.5" cy="35.7" r="28" fill="#525869"/>
        <text x="19" y="44" font-family="Liberation Sans" font-size="25" fill="#fff" stroke="#525869" stroke-width="0.45" font-weight="normal">84</text>
  <text x="47" y="44" font-family="Liberation Sans" font-size="9" fill="#fff">%</text>
  <path d="M71 28 L68 25 M71 28 L74 25 M71 23 V28.5" fill="none" stroke="#3ab0f0" stroke-width="1.6" transform="rotate(180 71 25.5)"/>
  <path d="M71 44 L68 47 M71 44 L74 47 M71 43 V49" fill="none" stroke="#22bb33" stroke-width="1.6" transform="rotate(180 71 46)"/>
  <text x="84" y="29" font-family="Liberation Sans" font-size="11" font-weight="bold" fill="#fff">0.5</text>
  <text x="101" y="29.5" font-family="Liberation Sans" font-size="9" fill="#aab">K/s</text>
  <text x="84" y="51" font-family="Liberation Sans" font-size="11" font-weight="bold" fill="#fff">0.2</text>
  <text x="101" y="51.5" font-family="Liberation Sans" font-size="9" fill="#aab">K/s</text>
</svg>
<div class="a" style="left:1774px;top:864px;width:53px;height:53px;border-radius:50%;background:conic-gradient(#2fd6c9 0deg,#52de9a 80deg,#9ee36a 130deg,#e8e040 180deg,#f5b83a 235deg,#f37a3a 280deg,#ee5a3a 300deg,transparent 300.5deg);-webkit-mask:radial-gradient(circle,transparent 24.5px,#000 25px,#000 26.5px,transparent 27px)"></div>
</body></html>
